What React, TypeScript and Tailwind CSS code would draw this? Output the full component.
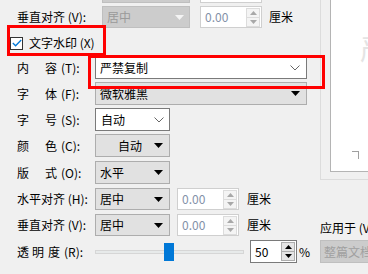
import React from 'react';

const Tri = ({ color = '#000' }: { color?: string }) => (
  <svg width="9" height="5" viewBox="0 0 9 5" className="shrink-0">
    <path d="M0 0 H9 L4.5 5 Z" fill={color} />
  </svg>
);

const Chevron = () => (
  <svg width="10" height="6" viewBox="0 0 10 6" className="shrink-0">
    <path d="M0.5 0.5 L5 5 L9.5 0.5" fill="none" stroke="#666" strokeWidth="1" />
  </svg>
);

const Spin = ({ value, dark }: { value: string; dark?: boolean }) => (
  <div className={`flex h-full items-center bg-white border ${dark ? 'border-[#7a7a7a] w-[47px]' : 'border-[#cfcfcf] w-[62px]'}`}>
    <span className={`flex-1 pl-[4px] ${dark ? 'text-black' : 'text-[#8391a8]'}`}>{value}</span>
    <div className={`flex flex-col h-[19px] w-[14px] mr-[1px] border ${dark ? 'border-[#adadad] bg-[#e5e5e5]' : 'border-[#dcdcdc] bg-[#f4f4f4]'}`}>
      <div className={`flex-1 flex items-center justify-center border-b ${dark ? 'border-[#adadad]' : 'border-[#dcdcdc]'}`}>
        <svg width="7" height="4" viewBox="0 0 7 4"><path d="M0 4 H7 L3.5 0 Z" fill={dark ? '#000' : '#a8a8a8'} /></svg>
      </div>
      <div className="flex-1 flex items-center justify-center">
        <svg width="7" height="4" viewBox="0 0 7 4"><path d="M0 0 H7 L3.5 4 Z" fill={dark ? '#000' : '#a8a8a8'} /></svg>
      </div>
    </div>
  </div>
);

const Label = ({ children, w = 'w-[95px]' }: { children: React.ReactNode; w?: string }) => (
  <div className={`${w} shrink-0 pl-[17px] flex items-center whitespace-nowrap`}>{children}</div>
);

const Gap2 = ({ a, b, key2 }: { a: string; b: string; key2: string }) => (
  <>
    <span>{a}</span>
    <span className="ml-[16px]">{b}</span>
    <span className="ml-[4px]">{key2}</span>
  </>
);

const Select = ({ text, w, center }: { text: string; w: string; center?: boolean }) => (
  <div className={`${w} h-full shrink-0 flex items-center bg-[#e1e1e1] border border-[#adadad] pl-[4px] pr-[6px]`}>
    <span className={`flex-1 ${center ? 'text-center pl-[6px]' : ''}`}>{text}</span>
    <Tri />
  </div>
);

export default function App() {
  return (
    <div className="relative w-[368px] h-[274px] overflow-hidden bg-[#f0f0f0] flex text-[12px] leading-none text-black font-['Microsoft_YaHei','Noto_Sans_CJK_SC',sans-serif]">
      <div className="w-[320px] shrink-0 flex flex-col">
        <div className="mt-[-20px] h-[23px] flex pl-[102px]">
          <div className="w-[88px] h-full bg-[#cccccc] border border-[#bfbfbf]" />
          <div className="ml-[10px] w-[62px] h-full bg-white border border-[#cfcfcf]" />
        </div>

        <div className="mt-[3px] h-[22px] flex">
          <Label w="w-[102px]">垂直对齐 (V):</Label>
          <div className="w-[88px] h-full flex items-center bg-[#cccccc] border border-[#bfbfbf] pl-[4px] pr-[5px] text-[#9a9a9a]">
            <span className="flex-1">居中</span>
            <Tri color="#f4f4f4" />
          </div>
          <div className="ml-[10px] h-full"><Spin value="0.00" /></div>
          <span className="ml-[7px] self-center">厘米</span>
        </div>

        <div className="mt-[8px] h-[14px] flex items-center pl-[10px]">
          <div className="w-[13px] h-[13px] bg-white border border-[#333333] flex items-center justify-center">
            <svg width="10" height="8" viewBox="0 0 10 8"><path d="M0.8 4 L3.6 6.8 L9.2 1" fill="none" stroke="#0078d7" strokeWidth="1.3" /></svg>
          </div>
          <span className="ml-[6px]">文字水印 (X)</span>
        </div>

        <div className="mt-[7px] h-[22px] flex">
          <Label><Gap2 a="内" b="容" key2="(T):" /></Label>
          <div className="w-[212px] h-full flex items-center bg-white border border-[#7a7a7a] pl-[4px] pr-[6px]">
            <span className="flex-1">严禁复制</span>
            <Chevron />
          </div>
        </div>

        <div className="mt-[3px] h-[23px] flex">
          <Label><Gap2 a="字" b="体" key2="(F):" /></Label>
          <Select text="微软雅黑" w="w-[212px]" />
        </div>

        <div className="mt-[3px] h-[23px] flex">
          <Label><Gap2 a="字" b="号" key2="(S):" /></Label>
          <div className="w-[75px] h-full flex items-center bg-white border border-[#7a7a7a] pl-[5px] pr-[5px]">
            <span className="flex-1">自动</span>
            <Chevron />
          </div>
        </div>

        <div className="mt-[3px] h-[23px] flex">
          <Label><Gap2 a="颜" b="色" key2="(C):" /></Label>
          <Select text="自动" w="w-[75px]" center />
        </div>

        <div className="mt-[4px] h-[23px] flex">
          <Label><Gap2 a="版" b="式" key2="(O):" /></Label>
          <Select text="水平" w="w-[75px]" />
        </div>

        <div className="mt-[4px] h-[22px] flex">
          <Label>水平对齐 (H):</Label>
          <Select text="居中" w="w-[75px]" />
          <div className="ml-[7px] h-full"><Spin value="0.00" /></div>
          <span className="ml-[8px] self-center">厘米</span>
        </div>

        <div className="mt-[4px] h-[22px] flex">
          <Label>垂直对齐 (V):</Label>
          <Select text="居中" w="w-[75px]" />
          <div className="ml-[7px] h-full"><Spin value="0.00" /></div>
          <span className="ml-[8px] self-center">厘米</span>
        </div>

        <div className="mt-[4px] h-[23px] flex">
          <Label>
            <span>透</span>
            <span className="ml-[3px]">明</span>
            <span className="ml-[4px]">度</span>
            <span className="ml-[4px]">(R):</span>
          </Label>
          <div className="w-[149px] h-full flex items-center">
            <div className="relative w-full h-[4px] bg-[#e7eaea] border border-[#d6d6d6]">
              <div className="absolute left-[68px] top-[-8px] w-[10px] h-[18px] bg-[#0078d7]" />
            </div>
          </div>
          <div className="ml-[6px] h-full"><Spin value="50" dark /></div>
          <span className="ml-[2px] self-center">%</span>
        </div>
      </div>

      <div className="flex-1 flex flex-col">
        <div className="h-[180px] border-l border-b border-[#dcdcdc] pl-[9px] pb-[7px]">
          <div className="relative h-full bg-white border-l border-b border-[#b4b4b4] pl-[29px] pt-[34px] overflow-hidden">
            <span className="block text-[28px] leading-none text-[#e4e4e4] whitespace-nowrap">严禁复制</span>
            <div className="absolute left-[21px] top-[151px] w-[7px] h-[8px] border-t border-r border-[#a0a0a0]" />
          </div>
        </div>
        <span className="mt-[42px] whitespace-nowrap">应用于 (V):</span>
        <div className="mt-[6px] h-[23px] w-[60px] bg-[#cccccc] border border-[#bfbfbf] flex items-center pl-[3px] text-[#a0a0a0] whitespace-nowrap">整篇文档</div>
      </div>

      <div className="absolute left-[7px] top-[25px] w-[99px] h-[31px] border-[3px] border-[#ff0000]" />
      <div className="absolute left-[88px] top-[55px] w-[237px] h-[34px] border-[3px] border-[#ff0000]" />
    </div>
  );
}
